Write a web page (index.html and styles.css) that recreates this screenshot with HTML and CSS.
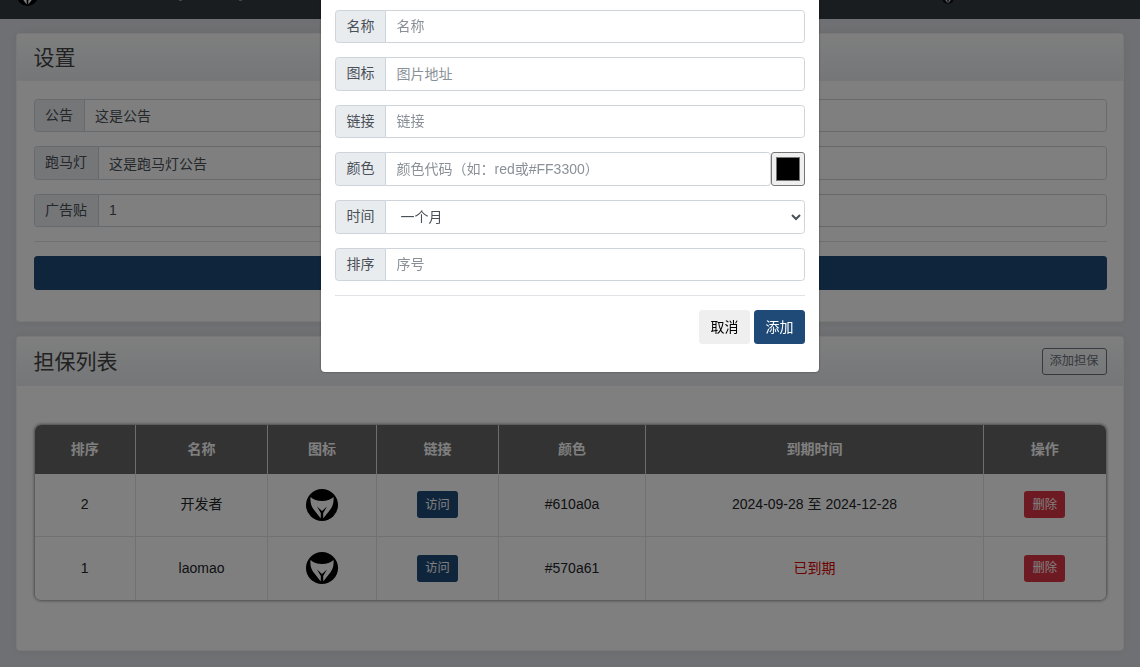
FILE: index.html
```html
<!DOCTYPE html>
<html lang="zh">
<head>
<meta charset="utf-8">
<title>设置</title>
<link rel="stylesheet" href="styles.css">
</head>
<body>
<svg class="defs" width="0" height="0" aria-hidden="true">
  <symbol id="bull" viewBox="0 0 32 32">
    <circle cx="16" cy="16" r="16" fill="#000"/>
    <path fill="#fff" d="M4.500 8C7.500 10.500 11 12 16 12S24.500 10.500 27.500 8C28 14 26.500 18 23.500 21.500L18 28.500 16 30 14 28.500 8.500 21.500C5.500 18 4 14 4.500 8Z"/>
    <path fill="#000" d="M11 17.500 16 22 21 17.500 17.200 24V30H14.800V24Z"/>
  </symbol>
</svg>

<nav class="navbar">
  <svg class="nav-logo"><use href="#bull"/></svg>
  <span class="nav-mark nav-mark-a"></span>
  <span class="nav-mark nav-mark-b"></span>
  <svg class="nav-avatar"><use href="#bull"/></svg>
</nav>

<main class="content">
  <section class="card">
    <header class="card-head"><h2 class="card-title">设置</h2></header>
    <div class="card-body">
      <div class="field"><span class="field-label">公告</span><input class="field-input" value="这是公告"></div>
      <div class="field"><span class="field-label">跑马灯</span><input class="field-input" value="这是跑马灯公告"></div>
      <div class="field"><span class="field-label">广告贴</span><input class="field-input" value="1"></div>
      <hr class="rule">
      <button class="btn btn-primary btn-block">保存</button>
    </div>
  </section>

  <section class="card card-list">
    <header class="card-head"><h2 class="card-title">担保列表</h2><button class="btn-sm btn-outline">添加担保</button></header>
    <div class="card-body list-body">
      <div class="table-wrap">
        <table class="table">
          <thead>
            <tr><th>排序</th><th>名称</th><th>图标</th><th>链接</th><th>颜色</th><th>到期时间</th><th>操作</th></tr>
          </thead>
          <tbody>
            <tr>
              <td>2</td><td>开发者</td>
              <td><svg class="row-logo"><use href="#bull"/></svg></td>
              <td><button class="btn-sm btn-primary">访问</button></td>
              <td>#610a0a</td><td>2024-09-28 至 2024-12-28</td>
              <td><button class="btn-sm btn-danger">删除</button></td>
            </tr>
            <tr>
              <td>1</td><td>laomao</td>
              <td><svg class="row-logo"><use href="#bull"/></svg></td>
              <td><button class="btn-sm btn-primary">访问</button></td>
              <td>#570a61</td><td class="expired">已到期</td>
              <td><button class="btn-sm btn-danger">删除</button></td>
            </tr>
          </tbody>
        </table>
      </div>
    </div>
  </section>
</main>

<div class="backdrop"></div>

<div class="modal">
  <div class="field"><span class="field-label">名称</span><input class="field-input" placeholder="名称"></div>
  <div class="field"><span class="field-label">图标</span><input class="field-input" placeholder="图片地址"></div>
  <div class="field"><span class="field-label">链接</span><input class="field-input" placeholder="链接"></div>
  <div class="field"><span class="field-label">颜色</span><input class="field-input" placeholder="颜色代码（如：red或#FF3300）"><input class="color-input" type="color" value="#000000"></div>
  <div class="field"><span class="field-label">时间</span><select class="field-input field-select"><option>一个月</option></select></div>
  <div class="field"><span class="field-label">排序</span><input class="field-input" placeholder="序号"></div>
  <hr class="rule">
  <div class="modal-actions">
    <button class="btn btn-light">取消</button>
    <button class="btn btn-primary">添加</button>
  </div>
</div>
</body>
</html>
```

FILE: styles.css
```css
* { box-sizing: border-box; }
html { font-size: 14px; }
body {
  margin: 0;
  height: 667px;
  overflow: hidden;
  background: #dfe1e6;
  color: #212529;
  font: 14px/1.5 "Liberation Sans", "Noto Sans CJK SC", sans-serif;
}
button, input, select { font: inherit; }
.defs { position: absolute; }

.navbar {
  height: 19px;
  background: #343a40;
  overflow: hidden;
  display: flex;
  align-items: flex-end;
  padding-left: 17px;
}
.nav-logo { width: 21px; height: 21px; flex: none; margin-bottom: 13.500px; }
.nav-mark {
  flex: none;
  align-self: flex-start;
  width: 3px;
  height: 1px;
  background: #8a8a90;
}
.nav-mark-a { margin-left: 141px; }
.nav-mark-b { margin-left: 57px; }
.nav-avatar { width: 12px; height: 12px; flex: none; margin: 0 0 15.500px 700px; opacity: .7; }

.content { padding: 14px 16px 0; }
.card {
  background: #fff;
  border: 1px solid rgba(0, 0, 0, .06);
  border-radius: 4px;
  box-shadow: 0 0 10px rgba(0, 0, 0, .06);
  margin-bottom: 14.500px;
}
.card-head {
  display: flex;
  align-items: center;
  justify-content: space-between;
  padding: 10.500px 16.500px;
  background: linear-gradient(#fcfefc, #ebedf2);
  border-bottom: 1px solid rgba(0, 0, 0, .06);
}
.card-title { margin: 0; font-size: 21px; font-weight: 400; line-height: 1.2; color: #444; }
.card-body { padding: 17.500px 16.500px 16.500px; }
.list-body { padding-top: 37.500px; padding-bottom: 49.500px; }

.field { display: flex; margin-bottom: 14px; }
.field-label {
  flex: none;
  padding: 5.250px 10.500px;
  background: #e9ecef;
  border: 1px solid #ced4da;
  border-radius: 3.500px 0 0 3.500px;
  color: #495057;
  white-space: nowrap;
}
.field-input {
  flex: 1;
  min-width: 0;
  height: 33.500px;
  margin-left: -1px;
  padding: 5.250px 10.500px;
  border: 1px solid #ced4da;
  border-radius: 0 3.500px 3.500px 0;
  background: #fff;
  color: #495057;
  outline: 0;
}
.field-input::placeholder { color: #6c757d; opacity: .8; }
.field-select { height: 34px; }
.color-input {
  flex: none;
  width: 34px;
  height: 33.500px;
  margin: 0;
  padding: 4px;
  background: #efefef;
  border: 1px solid #767676;
  border-radius: 3px;
}
.color-input::-webkit-color-swatch-wrapper { padding: 0; }
.color-input::-webkit-color-swatch { border: 1px solid #767676; }
.rule { height: 1px; margin: 0 0 14px; border: 0; background: #e2e3e6; }

.btn {
  padding: 5.250px 10.500px;
  height: 34px;
  border: 1px solid transparent;
  border-radius: 3.500px;
  line-height: 21px;
}
.btn-sm {
  min-width: 41px;
  padding: 3.500px 7px;
  border: 1px solid transparent;
  border-radius: 3px;
  font-size: 12.250px;
  line-height: 18px;
  white-space: nowrap;
}
.btn-block { display: block; width: 100%; margin-bottom: 14px; }
.btn-primary { background: #1f4a78; color: #fff; }
.btn-danger { background: #dc3545; color: #fff; }
.btn-light { background: #efefef; color: #000; }
.btn-outline { background: transparent; border-color: #6c757d; color: #6c757d; }

.table-wrap {
  border-radius: 7px;
  overflow: hidden;
  border: 1px solid #bbb;
  box-shadow: 0 0 3px rgba(0, 0, 0, .4);
}
.table { width: 100%; border-collapse: collapse; table-layout: fixed; text-align: center; }
.table th {
  height: 49px;
  padding: 1px 0 0;
  background: #666;
  color: #fff;
  font-weight: 700;
  border-left: 1px solid #ddd;
}
.table th:first-child, .table td:first-child { border-left: 0; width: 101px; }
.table th:nth-child(2) { width: 132px; }
.table th:nth-child(3) { width: 109px; }
.table th:nth-child(4) { width: 122px; }
.table th:nth-child(5) { width: 147px; }
.table th:nth-child(6) { width: 338px; }
.table td {
  height: 63px;
  padding: 0;
  border-left: 1px solid #dee2e6;
  border-top: 1px solid #dee2e6;
}
.table tbody tr:first-child td { border-top: 0; }
.row-logo { display: block; width: 32px; height: 32px; margin: 0 auto; }
.expired { color: #dc0000; }

.backdrop { position: fixed; inset: 0; background: rgba(0, 0, 0, .5); }
.modal {
  position: absolute;
  top: 0;
  left: 321px;
  width: 498px;
  height: 372px;
  padding: 9.500px 14px 0;
  background: #fff;
  border-radius: 0 0 4px 4px;
  box-shadow: 0 0 2px rgba(0, 0, 0, .5);
}
.modal-actions { display: flex; justify-content: flex-end; gap: 4px; }
```
